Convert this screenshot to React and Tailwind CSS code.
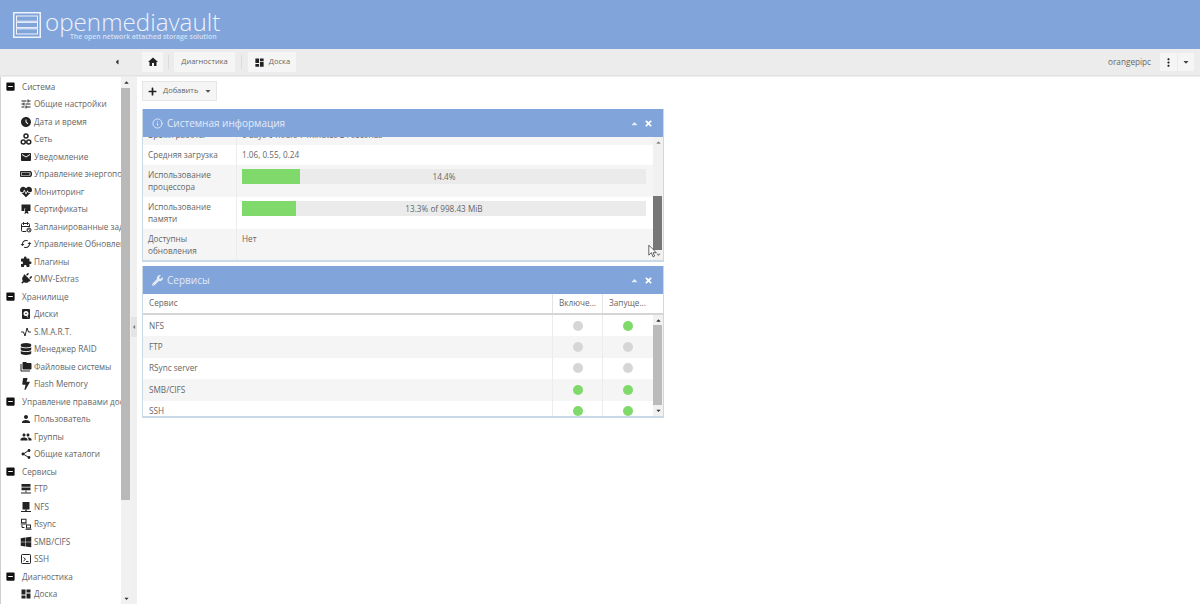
import {
  MdIndeterminateCheckBox, MdTune, MdAccessTimeFilled, MdEmail, MdCached, MdExtension, MdFolderCopy,
  MdPerson, MdPeople, MdShare, MdDashboard, MdHome, MdMoreVert,
} from 'react-icons/md'
import {
  FaBatteryFull, FaHeartbeat, FaPlug, FaDatabase, FaBolt, FaWindows, FaPlus, FaCaretDown, FaCaretUp,
  FaCaretLeft, FaWrench, FaTimes,
} from 'react-icons/fa'
import { TbCalendarTime, TbActivity } from 'react-icons/tb'
import { LuInfo } from 'react-icons/lu'

const Network = (p) => (
  <svg viewBox="0 0 24 24" fill="none" stroke="currentColor" strokeWidth="3" {...p}>
    <circle cx="12" cy="6" r="4" /><circle cx="6.5" cy="18" r="4" /><circle cx="17.5" cy="18" r="4" />
  </svg>
)
const Cert = (p) => (
  <svg viewBox="0 0 24 24" fill="currentColor" {...p}>
    <path d="M3 3h18v13h-5v-2a5 5 0 0 0-8-2v4H3z" /><circle cx="13" cy="14" r="4" /><path d="M10 17l-1 5 4-2 4 2-1-5z" />
  </svg>
)
const Disk = (p) => (
  <svg viewBox="0 0 24 24" {...p}>
    <rect x="4" y="2" width="16" height="20" rx="2" fill="currentColor" />
    <circle cx="12" cy="11" r="5" fill="#fff" /><circle cx="12" cy="11" r="1.6" fill="currentColor" />
    <path d="M13 14l3 5" stroke="#fff" strokeWidth="1.5" />
  </svg>
)
const Server = (p) => (
  <svg viewBox="0 0 24 24" fill="currentColor" {...p}>
    <rect x="3" y="2" width="18" height="5.5" /><rect x="3" y="9" width="18" height="5.5" />
    <rect x="11" y="15" width="2" height="4" /><rect x="2" y="19" width="20" height="2" />
  </svg>
)
const Desktop = (p) => (
  <svg viewBox="0 0 24 24" fill="currentColor" {...p}>
    <rect x="5" y="2" width="14" height="15" rx="1" /><rect x="10.5" y="17" width="3" height="3" /><rect x="2" y="20" width="20" height="2" />
  </svg>
)
const Laptops = (p) => (
  <svg viewBox="0 0 24 24" fill="none" stroke="currentColor" strokeWidth="2" {...p}>
    <rect x="3" y="2.5" width="9" height="7" /><path d="M1.5 12h12" /><rect x="13" y="14" width="8" height="6" />
    <path d="M11 22.5h12M4 14v5h5" />
  </svg>
)
const Console = (p) => (
  <svg viewBox="0 0 24 24" fill="none" stroke="currentColor" strokeWidth="2" {...p}>
    <rect x="3" y="3" width="18" height="18" rx="1.5" /><path d="M7 9l4 3.5L7 16M12 17h5" />
  </svg>
)
const Plug = ({ className }) => <FaPlug className={`${className} rotate-45`} />

const nav = [
  { label: 'Система' },
  { label: 'Общие настройки', icon: MdTune },
  { label: 'Дата и время', icon: MdAccessTimeFilled },
  { label: 'Сеть', icon: Network },
  { label: 'Уведомление', icon: MdEmail },
  { label: 'Управление энергопотреблением', icon: FaBatteryFull },
  { label: 'Мониторинг', icon: FaHeartbeat },
  { label: 'Сертификаты', icon: Cert },
  { label: 'Запланированные задачи', icon: TbCalendarTime },
  { label: 'Управление Обновлениями', icon: MdCached },
  { label: 'Плагины', icon: MdExtension },
  { label: 'OMV-Extras', icon: Plug },
  { label: 'Хранилище' },
  { label: 'Диски', icon: Disk },
  { label: 'S.M.A.R.T.', icon: TbActivity },
  { label: 'Менеджер RAID', icon: FaDatabase },
  { label: 'Файловые системы', icon: MdFolderCopy },
  { label: 'Flash Memory', icon: FaBolt },
  { label: 'Управление правами доступа' },
  { label: 'Пользователь', icon: MdPerson },
  { label: 'Группы', icon: MdPeople },
  { label: 'Общие каталоги', icon: MdShare },
  { label: 'Сервисы' },
  { label: 'FTP', icon: Server },
  { label: 'NFS', icon: Desktop },
  { label: 'Rsync', icon: Laptops },
  { label: 'SMB/CIFS', icon: FaWindows },
  { label: 'SSH', icon: Console },
  { label: 'Диагностика' },
  { label: 'Доска', icon: MdDashboard },
]

const services = [
  ['NFS', false, true],
  ['FTP', false, false],
  ['RSync server', false, false],
  ['SMB/CIFS', true, true],
  ['SSH', true, true],
]

function Logo() {
  return (
    <svg viewBox="0 0 28 26" className="w-[28px] h-[26px] shrink-0" fill="none" stroke="#eef3fb">
      <rect x="0.75" y="0.75" width="26.5" height="24.5" strokeWidth="1.5" />
      <rect x="3.5" y="4" width="21" height="5.2" strokeWidth="1" />
      <rect x="3.5" y="10.4" width="21" height="5.2" strokeWidth="1" />
      <rect x="3.5" y="16.8" width="21" height="5.2" strokeWidth="1" />
    </svg>
  )
}

function Header() {
  return (
    <div className="h-[49px] bg-[#81a4db] flex items-center pl-[13px] shrink-0">
      <Logo />
      <div className="ml-[4px] relative h-[30px]">
        <div className="text-[24.2px] leading-[24px] font-light text-[#eef3fb]">openmediavault</div>
        <div className="absolute left-[25px] top-[22px] text-[6.85px] leading-[9px] font-semibold text-[#d5e1f4] whitespace-nowrap">The open network attached storage solution</div>
      </div>
    </div>
  )
}

function Crumb({ children, className }) {
  return (
    <div className={`h-[20px] flex items-center justify-center gap-[4px] bg-[#f5f5f5] text-[7.5px] text-[#666] ${className}`}>
      {children}
    </div>
  )
}

function Toolbar() {
  return (
    <div className="h-[27px] bg-[#ececec] flex items-center shrink-0 border-b border-[#e2e2e2]">
      <div className="w-[142px] flex justify-end pr-[21px] text-[#333]"><FaCaretLeft className="w-[8px] h-[8px]" /></div>
      <Crumb className="w-[21px]"><MdHome className="w-[12px] h-[12px] text-[#222]" /></Crumb>
      <div className="w-px h-[14px] bg-[#dcdcdc] mx-[5px]" />
      <Crumb className="w-[61px]">Диагностика</Crumb>
      <div className="w-px h-[14px] bg-[#dcdcdc] mx-[6px]" />
      <Crumb className="w-[48px]"><MdDashboard className="w-[11px] h-[11px] text-[#222]" />Доска</Crumb>
      <div className="ml-auto text-[8.2px] text-[#666]">orangepipc</div>
      <div className="ml-[9px] w-[17px] h-[18px] bg-[#f5f5f5] flex items-center justify-center text-[#222]"><MdMoreVert className="w-[13px] h-[13px]" /></div>
      <div className="ml-px mr-[6px] w-[16px] h-[18px] bg-[#f5f5f5] flex items-center justify-center text-[#444]"><FaCaretDown className="w-[8px] h-[8px]" /></div>
    </div>
  )
}

function Scrollbar({ thumbTop, thumbHeight, thumb, arrow = '#333', width = 'w-[10px]', track = 'bg-[#f1f1f1]' }) {
  return (
    <div className={`${width} ${track} shrink-0 flex flex-col items-center relative`}>
      <FaCaretUp className="w-[7px] h-[7px] mt-[2px] shrink-0" style={{ color: arrow }} />
      <div className="absolute left-0 right-[1px]" style={{ top: thumbTop, height: thumbHeight, background: thumb }} />
      <FaCaretDown className="w-[7px] h-[7px] mt-auto mb-[2px] shrink-0" style={{ color: arrow }} />
    </div>
  )
}

function Sidebar() {
  return (
    <div className="w-[131px] h-full shrink-0 flex bg-white border-l border-[#cfcfcf] overflow-hidden">
      <div className="w-[120px] shrink-0 overflow-hidden pt-px">
        {nav.map(({ label, icon: Icon }) => (
          Icon ? (
            <div key={label} className="h-[17.5px] flex items-center pl-[19px] text-[8.2px] text-[#666] whitespace-nowrap">
              <span className="w-[14px] shrink-0"><Icon className="w-[12px] h-[12px] text-[#222]" /></span>
              {label}
            </div>
          ) : (
            <div key={label} className="h-[17.5px] flex items-center pl-[4px] text-[8.2px] text-[#666] whitespace-nowrap">
              <span className="w-[17px] shrink-0"><MdIndeterminateCheckBox className="w-[11px] h-[11px] text-[#111]" /></span>
              {label}
            </div>
          )
        ))}
      </div>
      <Scrollbar thumbTop="11px" thumbHeight="412px" thumb="#b9b9b9" />
    </div>
  )
}

function Splitter() {
  return (
    <div className="w-[6px] shrink-0 bg-[#f0f0f0] flex items-center justify-center pb-[28px]">
      <div className="w-[6px] h-[20px] bg-[#e4e4e4] flex items-center justify-center text-[#777]">
        <FaCaretLeft className="w-[6px] h-[6px]" />
      </div>
    </div>
  )
}

function PanelHeader({ icon, title }) {
  return (
    <div className="h-[28px] bg-[#81a4db] flex items-center pl-[9px] pr-[10px] shrink-0 text-[#e3ebf8]">
      {icon}
      <span className="ml-[4px] text-[10px]">{title}</span>
      <FaCaretUp className="ml-auto w-[9px] h-[9px] text-[#e3ebf8]" />
      <FaTimes className="ml-[5px] w-[9px] h-[9px] text-white" />
    </div>
  )
}

function Bar({ pct, label }) {
  return (
    <div className="h-[15px] bg-[#ebebeb] relative">
      <div className="absolute left-0 top-0 bottom-0 bg-[#7fd96b]" style={{ width: `${pct}%` }} />
      <div className="relative text-center text-[8.2px] leading-[15px] text-[#666]">{label}</div>
    </div>
  )
}

function InfoRow({ label, alt, height, children }) {
  return (
    <div className={`flex text-[8.2px] leading-[12px] text-[#666] ${alt ? 'bg-[#f5f5f5]' : 'bg-white'}`} style={{ height }}>
      <div className="w-[94px] shrink-0 px-[5px] py-[4px] border-r border-[#ececec]">{label}</div>
      <div className="flex-1 pl-[5px] pr-[7px] py-[4px]">{children}</div>
    </div>
  )
}

function SystemInfo() {
  return (
    <div className="w-[522px] h-[153px] flex flex-col border-x border-b-2 border-[#c9d9e8] overflow-hidden shrink-0">
      <PanelHeader icon={<LuInfo className="w-[11px] h-[11px]" />} title="Системная информация" />
      <div className="flex-1 flex min-h-0 relative">
        <div className="flex-1 overflow-hidden">
          <div className="mt-[-12px]">
            <InfoRow label="Время работы" alt height="20px">0 days 0 hours 7 minutes 24 seconds</InfoRow>
            <InfoRow label="Средняя загрузка" height="20px">1.06, 0.55, 0.24</InfoRow>
            <InfoRow label={<>Использование<br />процессора</>} alt height="32px"><Bar pct={14.4} label="14.4%" /></InfoRow>
            <InfoRow label={<>Использование<br />памяти</>} height="32px"><Bar pct={13.3} label="13.3% of 998.43 MiB" /></InfoRow>
            <InfoRow label={<>Доступны<br />обновления</>} alt height="32px">Нет</InfoRow>
          </div>
        </div>
        <Scrollbar thumbTop="59px" thumbHeight="54px" thumb="#777" arrow="#888" />
        <svg viewBox="0 0 12 16" className="absolute right-[5px] bottom-[2px] w-[10px] h-[14px]">
          <path d="M1 1v12l3-3 2 5 2-1-2-4h4z" fill="#fff" stroke="#444" strokeWidth="1" />
        </svg>
      </div>
    </div>
  )
}

function Dot({ on }) {
  return <div className={`w-[10px] h-[10px] rounded-full ${on ? 'bg-[#7fd96b]' : 'bg-[#d6d6d6]'}`} />
}

function Services() {
  return (
    <div className="w-[522px] h-[152px] mt-[4px] flex flex-col border-x border-b-2 border-[#c9d9e8] overflow-hidden shrink-0">
      <PanelHeader icon={<FaWrench className="w-[11px] h-[11px]" />} title="Сервисы" />
      <div className="h-[21px] flex text-[8.2px] text-[#666] bg-white border-b-2 border-[#d5d5d5] shrink-0">
        <div className="w-[409px] flex items-center px-[6px]">Сервис</div>
        <div className="w-[50px] flex items-center px-[6px] border-l border-[#e4e4e4] whitespace-nowrap">Включе...</div>
        <div className="w-[50px] flex items-center px-[6px] border-l border-[#e4e4e4] whitespace-nowrap">Запуще...</div>
      </div>
      <div className="flex-1 flex min-h-0">
        <div className="flex-1 overflow-hidden">
          {services.map(([name, enabled, running], i) => (
            <div key={name} className={`h-[21.4px] flex items-center text-[8.2px] text-[#666] ${i % 2 ? 'bg-[#f5f5f5]' : 'bg-white'}`}>
              <div className="w-[409px] px-[6px]">{name}</div>
              <div className="w-[50px] h-full flex items-center justify-center border-l border-[#ececec]"><Dot on={enabled} /></div>
              <div className="w-[50px] h-full flex items-center justify-center border-l border-[#ececec]"><Dot on={running} /></div>
            </div>
          ))}
        </div>
        <Scrollbar thumbTop="10px" thumbHeight="80px" thumb="#bbb" />
      </div>
    </div>
  )
}

export default function App() {
  return (
    <div className="w-[1200px] h-[604px] overflow-hidden flex flex-col bg-white font-['Open_Sans',sans-serif]">
      <Header />
      <Toolbar />
      <div className="flex-1 flex min-h-0 pt-px bg-[#ececec]">
        <Sidebar />
        <Splitter />
        <div className="flex-1 bg-white pl-[5px]">
          <div className="h-[32px] pt-[4px]">
            <div className="w-[75px] h-[20px] bg-[#f5f5f5] border border-[#e6e6e6] flex items-center pl-[5px] text-[7.5px] text-[#666]">
              <FaPlus className="w-[9px] h-[9px] text-[#222]" />
              <span className="ml-[6px]">Добавить</span>
              <FaCaretDown className="ml-[6px] w-[8px] h-[8px] text-[#555]" />
            </div>
          </div>
          <SystemInfo />
          <Services />
        </div>
      </div>
    </div>
  )
}
